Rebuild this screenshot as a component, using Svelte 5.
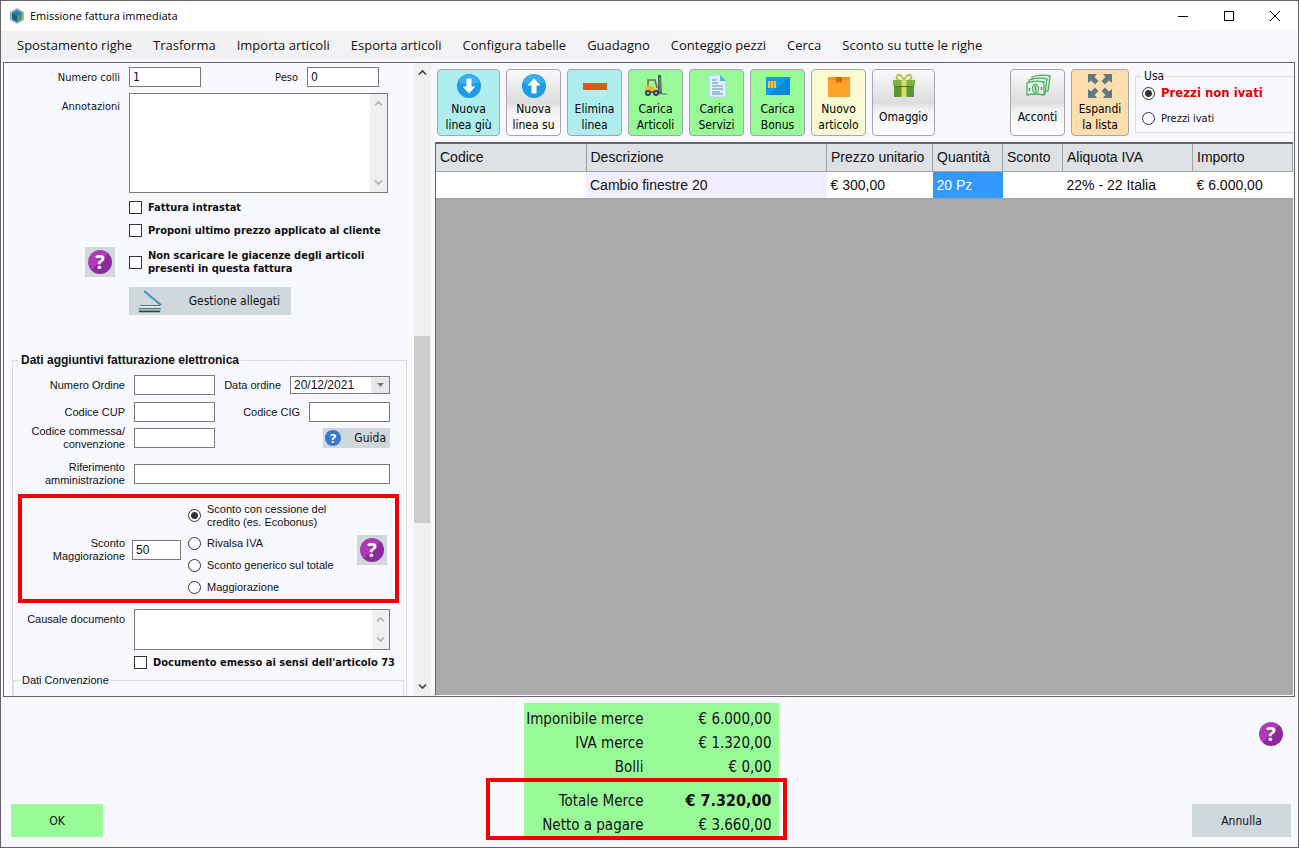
<script lang="ts">
	const menu = [
		'Spostamento righe',
		'Trasforma',
		'Importa articoli',
		'Esporta articoli',
		'Configura tabelle',
		'Guadagno',
		'Conteggio pezzi',
		'Cerca',
		'Sconto su tutte le righe'
	];

	const tools = [
		{ icon: 'down', lines: ['Nuova', 'linea giù'], tone: 'cyan', wide: true },
		{ icon: 'up', lines: ['Nuova', 'linea su'], tone: 'plain' },
		{ icon: 'minus', lines: ['Elimina', 'linea'], tone: 'cyan' },
		{ icon: 'forklift', lines: ['Carica', 'Articoli'], tone: 'green' },
		{ icon: 'sheet', lines: ['Carica', 'Servizi'], tone: 'green' },
		{ icon: 'card', lines: ['Carica', 'Bonus'], tone: 'green' },
		{ icon: 'box', lines: ['Nuovo', 'articolo'], tone: 'yellow' },
		{ icon: 'gift', lines: ['Omaggio'], tone: 'plain', wide: true }
	];

	const listTools = [
		{ icon: 'money', lines: ['Acconti'], tone: 'plain' },
		{ icon: 'expand', lines: ['Espandi', 'la lista'], tone: 'orange' }
	];

	const discounts = [
		['Sconto con cessione del', 'credito (es. Ecobonus)'],
		['Rivalsa IVA'],
		['Sconto generico sul totale'],
		['Maggiorazione']
	];

	let discount = $state(0);
	let prices = $state('netti');
	let orderDate = $state('20/12/2021');
</script>

{#snippet chevron(up: boolean)}
	<svg class="chevron" class:up viewBox="0 0 9 9" width="9" height="9">
		<path d="M1 2.5 4.5 6 8 2.5" fill="none" stroke="currentColor" stroke-width="1.7" />
	</svg>
{/snippet}

{#snippet toolIcon(name: string)}
	<svg viewBox="0 0 26 26" width="26" height="26">
		{#if name === 'down' || name === 'up'}
			<circle cx="13" cy="13" r="12" fill="#1c9be8" />
			<path d="M2 9a12 12 0 0 1 22 0q-11 5-22 0" fill="#3aaef0" />
			<path
				d="M10.5 5.5h5v8h4L13 20.5 6.5 13.5h4z"
				fill="#fff"
				transform={name === 'up' ? 'rotate(180 13 13)' : undefined}
			/>
		{:else if name === 'minus'}
			<path d="M1 10h24v7H1z" fill="#e8501c" />
		{:else if name === 'forklift'}
			<path d="M5 14V7h7l2 8" fill="none" stroke="#66704a" stroke-width="1.5" />
			<path d="M2 14q4-3 8 0l2 2h3v4H2z" fill="#f3b62a" />
			<path d="M2 18h13v2H2z" fill="#6a6a40" />
			<path d="M15 2h3l1 19h-4z" fill="#4b5a62" />
			<path d="M17 4v15" stroke="#8b9a90" stroke-width="1" />
			<path d="M19 21h5" stroke="#5f7060" stroke-width="1" />
			<circle cx="5" cy="20" r="3" fill="#37444c" />
			<circle cx="13" cy="20" r="3" fill="#37444c" />
			<circle cx="5" cy="20" r="1" fill="#d8dfe2" />
			<circle cx="13" cy="20" r="1" fill="#d8dfe2" />
		{:else if name === 'sheet'}
			<path d="M5 2h11l6 6v16H5z" fill="#dff1fc" stroke="#a9d3ec" stroke-width="1" />
			<path d="M16 2v6h6z" fill="#58afe0" />
			<path d="M8 7h5M8 10h6M8 13h11M8 16h11M8 19h8M8 21h11" stroke="#5a8db5" stroke-width="1" />
		{:else if name === 'card'}
			<path d="M1 4h24v18H1z" fill="#0f9bea" />
			<path d="M25 4v18H4z" fill="#0a88da" />
			<path d="M3 8h8v7H3z" fill="#f5c443" />
			<path d="M5.5 8v7M8.5 8v7" stroke="#c28b1c" stroke-width="1" />
		{:else if name === 'box'}
			<path d="M2 4h22v20H2z" fill="#fda428" />
			<path d="M2 4h22v3H2z" fill="#f7931a" />
			<path d="M10 4h6v6l-3-1-3 1z" fill="#d9620d" />
		{:else if name === 'gift'}
			<path d="M13 8C8 8 4 6 6 3s6 0 7 5c1-5 5-8 7-5s-2 5-7 5" fill="none" stroke="#b9c441" stroke-width="2" />
			<path d="M2 7h22v6H2z" fill="#7db34a" />
			<path d="M3 13h20v11H3z" fill="#5d9732" />
			<path d="M10.5 7h5v17h-5z" fill="#d8de63" />
			<path d="M3 13h20v1H3z" fill="#47781f" />
		{:else if name === 'money'}
			<g fill="#e4f5e6" stroke="#4caf62" stroke-width="1.3">
				<path d="M7 4q9-3 18-1l-2 15H7z" />
				<path d="M4 7q9-3 18-1l-2 15H4z" />
				<path d="M2 10q8-3 17-1v13q-9-2-17 0z" />
				<ellipse cx="10.5" cy="15.5" rx="3" ry="4" />
			</g>
			<path d="M10.500 13v5M4.500 15v3M16.500 14v3" stroke="#3d9e53" stroke-width="1.5" />
		{:else}
			<g fill="#5f7881">
				{#each [0, 90, 180, 270] as angle}
					<path d="M1 1h9L7.5 4l4 4L8 11.500l-4-4L1 10z" transform="rotate({angle} 13 13)" />
				{/each}
			</g>
		{/if}
	</svg>
{/snippet}

{#snippet tool(item: { icon: string; lines: string[]; tone: string; wide?: boolean })}
	<button class="tool {item.tone}" class:wide={item.wide} class:single={item.lines.length === 1}>
		{@render toolIcon(item.icon)}
		<span class="tool-text">
			{#each item.lines as line}
				<span>{line}</span>
			{/each}
		</span>
	</button>
{/snippet}

<div class="window">
	<header class="titlebar">
		<svg viewBox="0 0 14 16" width="14" height="16">
			<path d="M7 0l7 4v8l-7 4-7-4V4z" fill="#8fb9c4" />
			<path d="M7 2l5 3v6l-5 3-5-3V5z" fill="#2a7ea8" />
			<path d="M7 8l5-3v6l-5 3z" fill="#4d9a55" />
			<path d="M2 5l5 3v6l-5-3z" fill="#1d5f8c" />
		</svg>
		<h1>Emissione fattura immediata</h1>
		<div class="window-buttons">
			<button aria-label="Riduci a icona">
				<svg viewBox="0 0 12 12" width="12" height="12"><path d="M1 6.500h10" stroke="#000" /></svg>
			</button>
			<button aria-label="Ingrandisci">
				<svg viewBox="0 0 12 12" width="12" height="12"><path d="M1.500 1.500h9v9h-9z" fill="none" stroke="#000" /></svg>
			</button>
			<button aria-label="Chiudi">
				<svg viewBox="0 0 12 12" width="12" height="12"><path d="M1 1l10 10M11 1 1 11" stroke="#000" /></svg>
			</button>
		</div>
	</header>

	<nav class="menu">
		{#each menu as entry}
			<button>{entry}</button>
		{/each}
	</nav>

	<main>
		<aside>
			<div class="form">
				<div class="row tahoma">
					<label class="lead" for="colli">Numero colli</label>
					<input class="short" id="colli" value="1" />
					<div class="pair">
						<label for="peso">Peso</label>
						<input class="short" id="peso" value="0" />
					</div>
				</div>
				<div class="row notes tahoma">
					<label class="lead" for="note">Annotazioni</label>
					<div class="memo tall">
						<textarea id="note"></textarea>
						<div class="memo-bar">{@render chevron(true)}{@render chevron(false)}</div>
					</div>
				</div>

				<div class="checks">
					<label class="check"><input type="checkbox" /><span>Fattura intrastat</span></label>
					<label class="check"><input type="checkbox" /><span>Proponi ultimo prezzo applicato al cliente</span></label>
					<div class="check-help">
						<button class="help-box" aria-label="Aiuto giacenze"><span class="help">?</span></button>
						<label class="check">
							<input type="checkbox" />
							<span>Non scaricare le giacenze degli articoli<br />presenti in questa fattura</span>
						</label>
					</div>
					<button class="attach">
						<svg viewBox="0 0 26 24" width="26" height="24">
							<path d="M7 2 24 16" stroke="#3097d1" stroke-width="2" />
							<path d="M3 17h20l1 1v4l-1 1H2l-1-1v-4z" fill="#a9bcc3" />
							<path d="M2 17h22v2H2z" fill="#dfe8ea" />
							<path d="M2 19.500h22M3 16.500h20" stroke="#5c727b" stroke-width="1" />
							<path d="M2 22.500h21" stroke="#2f4048" stroke-width="1.500" />
						</svg>
						<span>Gestione allegati</span>
					</button>
				</div>

				<fieldset class="group">
					<legend class="strong">Dati aggiuntivi fatturazione elettronica</legend>
					<div class="rows">
						<div class="row">
							<label class="lead" for="ordine">Numero Ordine</label>
							<input class="mid" id="ordine" />
							<div class="pair end">
								<label for="data">Data ordine</label>
								<div class="select">
									<select id="data" bind:value={orderDate}>
										<option>20/12/2021</option>
									</select>
									<svg viewBox="0 0 7 4" width="7" height="4"><path d="M0 0h7L3.500 4z" fill="#777" /></svg>
								</div>
							</div>
						</div>
						<div class="row">
							<label class="lead" for="cup">Codice CUP</label>
							<input class="mid" id="cup" />
							<div class="pair end">
								<label for="cig">Codice CIG</label>
								<input class="mid" id="cig" />
							</div>
						</div>
						<div class="row">
							<label class="lead" for="commessa">Codice commessa/<br />convenzione</label>
							<input class="mid" id="commessa" />
							<button class="guide end"><span class="help blue">?</span>Guida</button>
						</div>
						<div class="row spaced">
							<label class="lead" for="riferimento">Riferimento<br />amministrazione</label>
							<input class="full" id="riferimento" />
						</div>
					</div>

					<div class="discount">
						<label class="lead" for="sconto">Sconto<br />Maggiorazione</label>
						<input id="sconto" value="50" />
						<div class="radios">
							{#each discounts as lines, i}
								<label class="radio">
									<input type="radio" name="sconto-tipo" value={i} bind:group={discount} />
									<span>{lines[0]}{#if lines[1]}<br />{lines[1]}{/if}</span>
								</label>
							{/each}
						</div>
						<button class="help-box end" aria-label="Aiuto sconto"><span class="help">?</span></button>
					</div>

					<div class="row top">
						<label class="lead" for="causale">Causale documento</label>
						<div class="memo">
							<textarea id="causale"></textarea>
							<div class="memo-bar">{@render chevron(true)}{@render chevron(false)}</div>
						</div>
					</div>
					<label class="check article"><input type="checkbox" /><span>Documento emesso ai sensi dell'articolo 73</span></label>
					<fieldset class="inner">
						<legend>Dati Convenzione</legend>
					</fieldset>
				</fieldset>
			</div>
			<div class="scrollbar">
				{@render chevron(true)}
				<div class="track"><div class="before"></div><div class="thumb"></div><div class="after"></div></div>
				{@render chevron(false)}
			</div>
		</aside>

		<section class="lines">
			<div class="toolbar">
				{#each tools as item}
					{@render tool(item)}
				{/each}
				<div class="fill"></div>
				{#each listTools as item}
					{@render tool(item)}
				{/each}
				<fieldset class="usa">
					<legend>Usa</legend>
					<label class="radio net"><input type="radio" name="prezzi" value="netti" bind:group={prices} /><span>Prezzi non ivati</span></label>
					<label class="radio"><input type="radio" name="prezzi" value="ivati" bind:group={prices} /><span>Prezzi ivati</span></label>
				</fieldset>
			</div>
			<div class="sheet">
				<table>
					<colgroup>
						<col class="c-code" />
						<col />
						<col class="c-price" />
						<col class="c-qty" />
						<col class="c-disc" />
						<col class="c-vat" />
						<col class="c-total" />
					</colgroup>
					<thead>
						<tr>
							<th>Codice</th>
							<th>Descrizione</th>
							<th>Prezzo unitario</th>
							<th>Quantità</th>
							<th>Sconto</th>
							<th>Aliquota IVA</th>
							<th>Importo</th>
						</tr>
					</thead>
					<tbody>
						<tr>
							<td></td>
							<td class="desc">Cambio finestre 20</td>
							<td>€ 300,00</td>
							<td class="selected">20 Pz</td>
							<td></td>
							<td>22% - 22 Italia</td>
							<td>€ 6.000,00</td>
						</tr>
					</tbody>
				</table>
			</div>
		</section>
	</main>

	<footer>
		<button class="ok">OK</button>
		<div class="totals">
			<dl>
				<dt>Imponibile merce</dt>
				<dd>€ 6.000,00</dd>
				<dt>IVA merce</dt>
				<dd>€ 1.320,00</dd>
				<dt>Bolli</dt>
				<dd>€ 0,00</dd>
			</dl>
			<dl class="due">
				<dt>Totale Merce</dt>
				<dd class="grand">€ 7.320,00</dd>
				<dt>Netto a pagare</dt>
				<dd>€ 3.660,00</dd>
			</dl>
		</div>
		<div class="footer-end">
			<button class="help" aria-label="Aiuto">?</button>
			<button class="cancel">Annulla</button>
		</div>
	</footer>
</div>

<style>
	:global(body) {
		background: #f8f8ff;
	}

	* {
		box-sizing: border-box;
	}

	.window {
		height: 100vh;
		display: flex;
		flex-direction: column;
		border: 1px solid #66626a;
		background: #f8f8ff;
		color: #111;
		font: 11px/13px 'Liberation Sans', Arial, sans-serif;
	}

	button,
	input,
	select,
	textarea {
		font: inherit;
		color: inherit;
		margin: 0;
		padding: 0;
		border: 0;
		border-radius: 0;
	}

	.titlebar {
		display: flex;
		align-items: center;
		gap: 6px;
		height: 30px;
		padding-left: 9px;
		background: #fff;
		flex-shrink: 0;
	}

	h1 {
		margin: 0;
		font: 11px/16px 'Open Sans', sans-serif;
		color: #000;
	}

	.window-buttons {
		display: flex;
		margin-left: auto;
	}

	.window-buttons button {
		width: 46px;
		height: 28px;
		display: grid;
		place-items: center;
		background: none;
	}

	.menu {
		display: flex;
		gap: 21px;
		height: 28px;
		margin-bottom: 3px;
		padding: 0 16px;
		background: linear-gradient(to right, #f0f0f0, #f8f8fc);
		flex-shrink: 0;
	}

	.menu button {
		background: none;
		font: 13px/28px 'Open Sans', sans-serif;
		white-space: nowrap;
	}

	main {
		flex: 1;
		min-height: 0;
		display: flex;
		gap: 4px;
		margin: 0 3px 0 2px;
		border: 1px solid #66626a;
	}

	aside {
		width: 427px;
		display: flex;
		overflow: hidden;
		flex-shrink: 0;
	}

	.form {
		flex: 1;
		padding: 4px 7px 0 0;
	}

	.tahoma,
	.check {
		font-family: 'DejaVu Sans Condensed', 'DejaVu Sans', sans-serif;
	}

	.row {
		display: flex;
		align-items: center;
		gap: 9px;
	}

	.lead {
		width: 112px;
		text-align: right;
		flex-shrink: 0;
	}

	.tahoma .lead {
		width: 116px;
	}

	.pair {
		display: flex;
		align-items: center;
		gap: 9px;
	}

	.form > .row {
		justify-content: flex-start;
		padding-right: 28px;
	}

	.form > .row .pair {
		margin-left: auto;
	}

	.end {
		margin-left: auto;
	}

	input:not([type]) {
		height: 20px;
		padding: 0 3px;
		border: 1px solid #7a7a7a;
		background: #fff;
		font-size: 12px;
	}

	.short {
		width: 72px;
	}

	.mid {
		width: 81px;
	}

	.full {
		flex: 1;
		min-width: 0;
	}

	.form > .notes {
		align-items: flex-start;
		margin-top: 6px;
		padding-right: 19px;
	}

	.notes .lead {
		padding-top: 7px;
	}

	.memo {
		flex: 1;
		display: flex;
		height: 41px;
		border: 1px solid #7a7a7a;
		background: #fff;
	}

	.memo.tall {
		height: 100px;
	}

	.memo textarea {
		flex: 1;
		min-width: 0;
		resize: none;
		background: none;
	}

	.memo-bar {
		width: 17px;
		display: flex;
		flex-direction: column;
		justify-content: space-between;
		align-items: center;
		padding: 5px 0;
		background: #f0f0f0;
		color: #b0b0b0;
	}

	.chevron.up {
		transform: rotate(180deg);
	}

	.checks {
		display: flex;
		flex-direction: column;
		align-items: flex-start;
		gap: 9px;
		padding: 7px 0 0 125px;
	}

	.check {
		display: flex;
		align-items: center;
		gap: 6px;
		min-height: 14px;
		font-weight: bold;
	}

	input[type='checkbox'],
	input[type='radio'] {
		appearance: none;
		width: 13px;
		height: 13px;
		border: 1px solid #333;
		background: #fff;
		flex-shrink: 0;
	}

	input[type='checkbox']:checked {
		box-shadow: inset 0 0 0 2px #fff;
		background: #333;
	}

	input[type='radio'] {
		border-radius: 50%;
	}

	input[type='radio']:checked {
		background: radial-gradient(circle, #333 3px, #fff 4px);
	}

	.check-help {
		height: 32px;
		display: flex;
		align-items: center;
		gap: 14px;
		margin-left: -44px;
	}

	.help-box {
		width: 30px;
		height: 30px;
		display: grid;
		place-items: center;
		background: #cfd8dc;
	}

	.help {
		width: 24px;
		height: 24px;
		display: block;
		border-radius: 50%;
		background: linear-gradient(135deg, #b03ab5 50%, #8a2a9c 50%);
		color: #fff;
		font: bold 20px/24px 'Open Sans', sans-serif;
		text-align: center;
	}

	.help.blue {
		width: 16px;
		height: 16px;
		background: #3a77cf;
		font-size: 13px;
		line-height: 16px;
	}

	.attach,
	.guide,
	.ok,
	.cancel {
		background: #cfd8dc;
		font: 12px/16px 'DejaVu Sans Condensed', 'DejaVu Sans', sans-serif;
	}

	.attach {
		width: 162px;
		height: 28px;
		display: flex;
		align-items: center;
		justify-content: space-between;
		padding: 0 11px 0 8px;
	}

	.group {
		min-width: 0;
		margin: 38px 0 0 8px;
		padding: 8px 0 0;
		border: 1px solid #dcdce2;
		border-bottom: 0;
	}

	legend {
		padding: 0 2px;
		margin-left: 6px;
		line-height: 14px;
	}

	legend.strong {
		font-weight: bold;
		font-size: 12px;
	}

	.rows {
		display: flex;
		flex-direction: column;
		padding-right: 16px;
		gap: 6px;
	}

	.rows .row {
		height: 20px;
	}

	.rows .row:nth-child(2) {
		margin-top: 1px;
	}

	.rows .spaced {
		margin-top: 10px;
	}

	.select {
		position: relative;
		width: 100px;
		height: 18px;
	}

	.select select {
		appearance: none;
		width: 100%;
		height: 100%;
		padding-left: 3px;
		border: 1px solid #7a7a7a;
		background: linear-gradient(to left, #e8e8e8 18px, #fff 18px);
		font-size: 12px;
	}

	.select svg {
		position: absolute;
		right: 6px;
		top: 7px;
		pointer-events: none;
	}

	.guide {
		width: 67px;
		height: 20px;
		display: flex;
		align-items: center;
		justify-content: space-between;
		padding: 0 4px 0 2px;
	}

	.discount {
		display: flex;
		align-items: center;
		gap: 7px;
		height: 109px;
		margin: 10px 7px 6px 5px;
		padding: 3px 8px 0 0;
		border: 4px solid #f00000;
	}

	.discount .lead {
		width: 103px;
	}

	#sconto {
		width: 49px;
	}

	.radios {
		display: flex;
		flex-direction: column;
		gap: 8px;
		padding-bottom: 3px;
		white-space: nowrap;
	}

	.radio {
		display: flex;
		align-items: center;
		gap: 6px;
		min-height: 14px;
	}

	.row.top {
		align-items: flex-start;
		padding-right: 16px;
	}

	.row.top .lead {
		padding-top: 4px;
	}

	.article {
		margin: 5px 0 4px 121px;
		white-space: nowrap;
	}

	.inner {
		min-width: 0;
		height: 40px;
		margin: 0 2px 0 0;
		padding: 0;
		border: 1px solid #dcdce2;
	}

	.scrollbar {
		width: 17px;
		display: flex;
		flex-direction: column;
		align-items: center;
		padding: 5px 0;
		gap: 4px;
		background: #f0f0f0;
		color: #444;
	}

	.track {
		flex: 1;
		align-self: stretch;
		display: flex;
		flex-direction: column;
	}

	.before {
		flex: 256;
	}

	.thumb {
		flex: 188;
		margin-right: 1px;
		background: #cdcdcd;
	}

	.after {
		flex: 156;
	}

	.lines {
		flex: 1;
		min-width: 0;
		display: flex;
		flex-direction: column;
		padding: 0 1px 1px 0;
	}

	.toolbar {
		display: flex;
		gap: 6px;
		padding: 6px 0 6px 2px;
	}

	.tool {
		width: 55px;
		height: 67px;
		display: flex;
		flex-direction: column;
		align-items: center;
		padding-top: 3px;
		border: 1px solid #a5a5ad;
		border-radius: 4px;
		color: #000;
		font: 12px/16px 'DejaVu Sans Condensed', 'DejaVu Sans', sans-serif;
		white-space: nowrap;
	}

	.tool.wide {
		width: 63px;
	}

	.tool-text {
		display: flex;
		flex-direction: column;
		align-items: center;
		margin-top: 2px;
	}

	.single .tool-text {
		margin-top: 10px;
	}

	.cyan {
		background: #afeeee;
	}

	.plain {
		background: linear-gradient(#fafafa, #dcdcdc 50%, #f0f0f0 60%, #fff);
	}

	.green {
		background: #98fb98;
	}

	.yellow {
		background: #fafad2;
	}

	.orange {
		width: 58px;
		background: #ffdead;
	}

	.fill {
		flex: 1;
	}

	.usa {
		width: 159px;
		min-width: 0;
		margin: 0 -1px 3px 0;
		padding: 2px 0 0 6px;
		border: 1px solid #dcdce2;
		border-right: 0;
		font-family: 'DejaVu Sans Condensed', 'DejaVu Sans', sans-serif;
	}

	.usa legend {
		margin-left: 0;
		font-size: 12px;
	}

	.usa .radio + .radio {
		margin-top: 10px;
	}

	.net {
		color: #e60000;
		font-size: 13px;
		font-weight: bold;
		line-height: 16px;
	}

	.sheet {
		flex: 1;
		border: 1px solid #66626a;
		border-top-width: 2px;
		border-bottom: 0;
		border-right: 0;
		background: #aaa;
	}

	table {
		width: 100%;
		table-layout: fixed;
		border-collapse: collapse;
		background: #fff;
		font-size: 14px;
		line-height: 16px;
	}

	.c-code {
		width: 150px;
	}

	.c-price {
		width: 106px;
	}

	.c-qty {
		width: 70px;
	}

	.c-disc {
		width: 60px;
	}

	.c-vat {
		width: 130px;
	}

	.c-total {
		width: 100px;
	}

	th,
	td {
		height: 27px;
		padding: 0 4px;
		font-weight: normal;
		text-align: left;
		white-space: nowrap;
		border-bottom: 1px solid #a0a0a0;
	}

	th {
		background: #dee1e6;
		border-right: 1px solid #a0a0a0;
	}

	.desc {
		background: #f0eeff;
	}

	.selected {
		background: #3399ff;
		color: #fff;
	}

	footer {
		display: grid;
		grid-template-columns: 1fr 255px 1fr;
		padding: 6px 7px 10px 10px;
		flex-shrink: 0;
	}

	.ok {
		align-self: end;
		width: 92px;
		height: 33px;
		background: #98fb98;
	}

	.totals {
		background: #98fb98;
		font: 15px/24px 'DejaVu Sans Condensed', 'DejaVu Sans', sans-serif;
	}

	dl {
		display: grid;
		grid-template-columns: 120px 1fr;
		margin: 0;
		padding: 4px 7px 4px 0;
		text-align: right;
	}

	dd {
		margin: 0;
	}

	.due {
		position: relative;
		padding: 6px 7px 0 0;
	}

	/* red frame, wider than the green panel */
	.due::before {
		content: '';
		position: absolute;
		inset: -5px -8px -3px -38px;
		border: 4px solid #f00000;
	}

	.grand {
		font-size: 16px;
		font-weight: bold;
	}

	.footer-end {
		display: flex;
		flex-direction: column;
		align-items: flex-end;
		justify-content: space-between;
		padding-top: 19px;
	}

	.footer-end .help {
		margin-right: 8px;
	}

	.cancel {
		width: 99px;
		height: 33px;
	}
</style>
